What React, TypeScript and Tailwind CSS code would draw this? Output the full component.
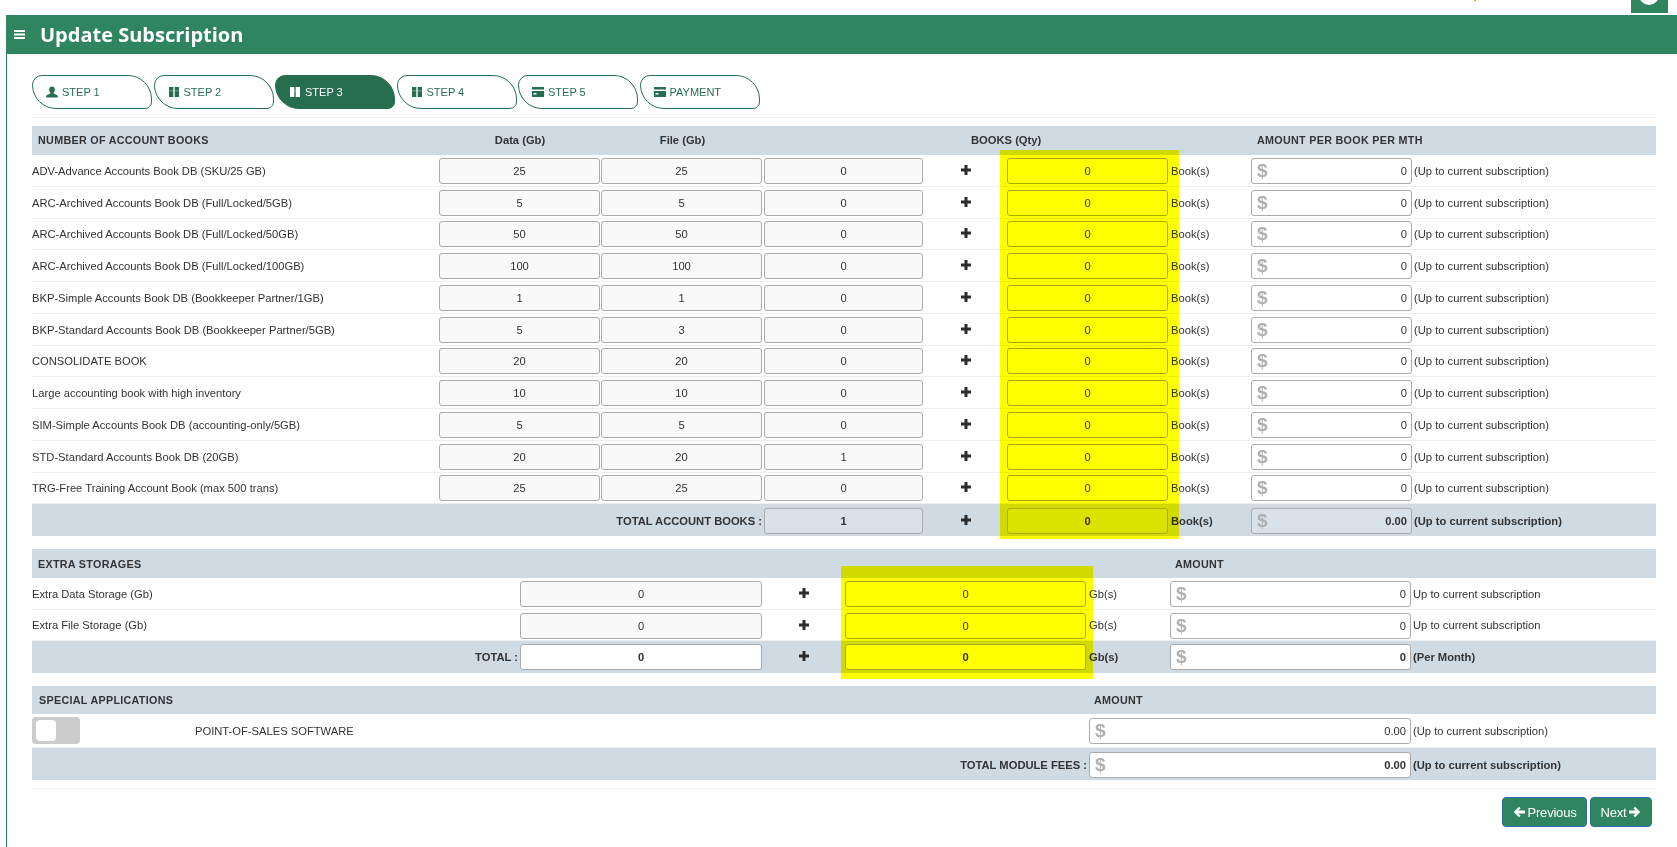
const GREEN = 'bg-[#2e855f]'

const books = [
  ['ADV-Advance Accounts Book DB (SKU/25 GB)', '25', '25', '0'],
  ['ARC-Archived Accounts Book DB (Full/Locked/5GB)', '5', '5', '0'],
  ['ARC-Archived Accounts Book DB (Full/Locked/50GB)', '50', '50', '0'],
  ['ARC-Archived Accounts Book DB (Full/Locked/100GB)', '100', '100', '0'],
  ['BKP-Simple Accounts Book DB (Bookkeeper Partner/1GB)', '1', '1', '0'],
  ['BKP-Standard Accounts Book DB (Bookkeeper Partner/5GB)', '5', '3', '0'],
  ['CONSOLIDATE BOOK', '20', '20', '0'],
  ['Large accounting book with high inventory', '10', '10', '0'],
  ['SIM-Simple Accounts Book DB (accounting-only/5GB)', '5', '5', '0'],
  ['STD-Standard Accounts Book DB (20GB)', '20', '20', '1'],
  ['TRG-Free Training Account Book (max 500 trans)', '25', '25', '0'],
]

const bookCols = 'grid grid-cols-[407px_162px_163px_159px_84px_161px_83px_161px_1fr] items-center'
const storageCols = 'grid grid-cols-[488px_242px_83px_241px_84px_241px_1fr] items-center'
const moduleCols = 'grid grid-cols-[1057px_322px_1fr] items-center'

function UserIcon({ className }: { className: string }) {
  return (
    <svg viewBox="0 0 12 12" className={`w-[12px] h-[12px] ${className}`} fill="currentColor">
      <path d="M6 .5c1.800 0 2.800 1.300 2.800 3 0 1.200-.5 2.300-1.200 3v1l3.400 1.400c.5.2.8.6.8 1.100V11.500H.2V10c0-.5.3-.9.8-1.100l3.400-1.400v-1C3.700 5.800 3.200 4.700 3.200 3.500c0-1.700 1-3 2.800-3z" />
    </svg>
  )
}

function BookIcon({ className }: { className: string }) {
  return (
    <svg viewBox="0 0 10 10" className={`w-[10px] h-[10px] ${className}`} fill="currentColor">
      <rect x="0" y="0" width="4.300" height="10" />
      <rect x="5.700" y="0" width="4.300" height="10" />
      <rect x="0" y="3.500" width="10" height="0.700" fill="#ffffff" opacity="0.5" />
    </svg>
  )
}

function CardIcon({ className }: { className: string }) {
  return (
    <svg viewBox="0 0 12 10" className={`w-[12px] h-[10px] ${className}`} fill="currentColor">
      <path d="M0 0h12v2.500H0zM0 4h12v6H0zM1.500 6v1.500h3V6z" fillRule="evenodd" />
    </svg>
  )
}

function PlusIcon() {
  return (
    <svg viewBox="0 0 10 10" className="w-[10px] h-[10px] text-[#2b2b2b] -mt-[2px]" fill="currentColor">
      <path d="M3.500 0h3v3.500H10v3H6.500V10h-3V6.500H0v-3h3.500z" />
    </svg>
  )
}

function ArrowIcon({ right }: { right?: boolean }) {
  return (
    <svg viewBox="0 0 12 12" className={`w-[12px] h-[12px] ${right ? 'rotate-180' : ''}`} fill="currentColor">
      <path d="M6 .8 7.600 2.400 5.300 4.600H12V7.400H5.300L7.600 9.600 6 11.200.8 6z" />
    </svg>
  )
}

function Tab({ label, icon, active }: { label: string; icon: 'user' | 'book' | 'card'; active?: boolean }) {
  const Icon = icon === 'user' ? UserIcon : icon === 'book' ? BookIcon : CardIcon
  return (
    <div
      className={`flex items-center gap-[4px] w-[120px] h-[34px] pl-[13px] border border-[#276e50] rounded-[14px_34px_10px_34px] text-[11px] ${active ? 'bg-[#276e50] text-white' : 'bg-white text-[#276e50]'}`}
    >
      <span className="flex justify-center w-[12px]">
        <Icon className={active ? 'text-white' : 'text-[#276e50]'} />
      </span>
      <span>{label}</span>
    </div>
  )
}

function Field({ value, width, tone = 'gray', bold }: { value: string; width: string; tone?: 'gray' | 'white' | 'clear'; bold?: boolean }) {
  const bg = tone === 'gray' ? 'bg-[#f9f9f9]' : tone === 'white' ? 'bg-white' : 'bg-[#dae2e9]'
  return (
    <div className={`flex items-center justify-center h-[26px] pt-[1px] border border-[#ababab] rounded-[3px] text-[11.200px] text-[#333] ${bg} ${width} ${bold ? 'font-bold' : ''}`}>
      {value}
    </div>
  )
}

function Money({ value, width, tone = 'white', bold }: { value: string; width: string; tone?: 'white' | 'clear'; bold?: boolean }) {
  return (
    <div className={`flex items-center justify-between h-[26px] pl-[5px] pr-[4px] border border-[#ababab] rounded-[3px] text-[11.200px] text-[#333] ${tone === 'white' ? 'bg-white' : 'bg-[#dae2e9]'} ${width} ${bold ? 'font-bold' : ''}`}>
      <span className="-mt-[1px] text-[19px] font-bold text-[#b0b0b0] leading-none">$</span>
      <span className="pt-[1px]">{value}</span>
    </div>
  )
}

function Plus() {
  return (
    <div className="flex justify-center pl-[1px]">
      <PlusIcon />
    </div>
  )
}

export default function App() {
  return (
    <div className="relative w-full h-[847px] overflow-hidden bg-white text-[11.200px] text-[#333] font-['Liberation_Sans',Arial,sans-serif]">
      <div className="flex justify-end h-[15px]">
        <div className="w-[2px] h-[1px] bg-[#e69a3c] mr-[155px]" />
        <div className={`relative w-[37px] h-[13px] overflow-hidden mr-[9px] ${GREEN}`}>
          <div className="absolute left-[8px] -top-[15px] w-[20px] h-[20px] rounded-full bg-white" />
        </div>
      </div>

      <div className="ml-[6px] h-[832px] border-l-[1.500px] border-[#2e855f]">
        <div className={`flex items-center h-[39px] pl-[7px] text-white ${GREEN}`}>
          <svg viewBox="0 0 11 9" className="w-[11px] h-[9px]" fill="currentColor">
            <path d="M0 0h11v2H0zM0 3.500h11v2H0zM0 7h11v2H0z" />
          </svg>
          <h1 className="ml-[15px] text-[20px] font-bold font-['Open_Sans',sans-serif]">Update Subscription</h1>
        </div>

        <div className="pl-[25px] pr-[21px]">
          <div className="flex gap-[1.500px] pt-[21px] pb-[8px] border-b border-[#eeeeee]">
            <Tab label="STEP 1" icon="user" />
            <Tab label="STEP 2" icon="book" />
            <Tab label="STEP 3" icon="book" active />
            <Tab label="STEP 4" icon="book" />
            <Tab label="STEP 5" icon="card" />
            <Tab label="PAYMENT" icon="card" />
          </div>

          {/* account books */}
          <div className="relative mt-[8px]">
            <div className={`${bookCols} h-[29px] bg-[#d0dae3] font-bold`}>
              <span className="pl-[6px] text-[10.750px] tracking-[0.300px] whitespace-nowrap">NUMBER OF ACCOUNT BOOKS</span>
              <span className="text-center">Data (Gb)</span>
              <span className="text-center">File (Gb)</span>
              <span />
              <span />
              <span className="-ml-[36px] whitespace-nowrap">BOOKS (Qty)</span>
              <span />
              <span className="pl-[6px] whitespace-nowrap text-[10.750px] tracking-[0.300px]">AMOUNT PER BOOK PER MTH</span>
            </div>
            {books.map(b => (
              <div key={b[0]} className={`${bookCols} h-[31.750px] pt-[1px] border-b border-[#eeeeee]`}>
                <span className="pt-[1px] whitespace-nowrap">{b[0]}</span>
                <Field value={b[1]} width="w-[161px]" />
                <Field value={b[2]} width="w-[161px]" />
                <Field value={b[3]} width="w-[159px]" />
                <Plus />
                <Field value="0" width="w-[161px]" tone="white" />
                <span className="pt-[1px] pl-[3px]">Book(s)</span>
                <Money value="0" width="w-[161px]" />
                <span className="pt-[1px] pl-[2px] whitespace-nowrap">(Up to current subscription)</span>
              </div>
            ))}
            <div className={`${bookCols} h-[32px] pt-[1px] bg-[#d0dae3] font-bold`}>
              <span />
              <span />
              <span className="pt-[1px] text-right pr-[2px] whitespace-nowrap">TOTAL ACCOUNT BOOKS :</span>
              <Field value="1" width="w-[159px]" tone="clear" bold />
              <Plus />
              <Field value="0" width="w-[161px]" tone="clear" bold />
              <span className="pt-[1px] pl-[3px]">Book(s)</span>
              <Money value="0.00" width="w-[161px]" tone="clear" bold />
              <span className="pt-[1px] pl-[2px] whitespace-nowrap">(Up to current subscription)</span>
            </div>
            <div className="absolute left-[967.500px] top-[24px] w-[179px] h-[389px] bg-[#ffff00] mix-blend-multiply" />
          </div>

          {/* extra storage */}
          <div className="relative mt-[13px]">
            <div className={`${storageCols} h-[29px] bg-[#d0dae3] font-bold`}>
              <span className="pl-[6px] text-[10.750px] tracking-[0.300px]">EXTRA STORAGES</span>
              <span />
              <span />
              <span />
              <span />
              <span className="pl-[5px] text-[10.750px] tracking-[0.300px]">AMOUNT</span>
            </div>
            {['Extra Data Storage (Gb)', 'Extra File Storage (Gb)'].map(label => (
              <div key={label} className={`${storageCols} h-[31.500px] pt-[1px] border-b border-[#eeeeee]`}>
                <span>{label}</span>
                <Field value="0" width="w-[242px]" />
                <Plus />
                <Field value="0" width="w-[241px]" tone="white" />
                <span className="pl-[3px]">Gb(s)</span>
                <Money value="0" width="w-[241px]" />
                <span className="pl-[2px] whitespace-nowrap">Up to current subscription</span>
              </div>
            ))}
            <div className={`${storageCols} h-[32px] bg-[#d0dae3] font-bold`}>
              <span className="text-right pr-[2px]">TOTAL :</span>
              <Field value="0" width="w-[242px]" tone="white" />
              <Plus />
              <Field value="0" width="w-[241px]" tone="white" />
              <span className="pl-[3px]">Gb(s)</span>
              <Money value="0" width="w-[241px]" />
              <span className="pl-[2px] whitespace-nowrap">(Per Month)</span>
            </div>
            <div className="absolute left-[808.500px] top-[17px] w-[252px] h-[113px] bg-[#ffff00] mix-blend-multiply" />
          </div>

          {/* special applications */}
          <div className="mt-[13px] pb-[8px] border-b border-[#eeeeee]">
            <div className={`${moduleCols} h-[28px] bg-[#d0dae3] font-bold`}>
              <span className="pl-[7px] text-[10.750px] tracking-[0.300px]">SPECIAL APPLICATIONS</span>
              <span className="pl-[5px] text-[10.750px] tracking-[0.300px]">AMOUNT</span>
            </div>
            <div className={`${moduleCols} h-[34px] pt-[1px] border-b border-[#eeeeee]`}>
              <div className="flex items-center">
                <div className="flex items-center w-[48px] h-[27px] -mt-[2px] pl-[4px] bg-[#cccccc] rounded-[4px]">
                  <div className="w-[20px] h-[21px] bg-white rounded-[4px]" />
                </div>
                <span className="pt-[1px] ml-[115px]">POINT-OF-SALES SOFTWARE</span>
              </div>
              <Money value="0.00" width="w-[322px]" />
              <span className="pt-[1px] pl-[2px] whitespace-nowrap">(Up to current subscription)</span>
            </div>
            <div className={`${moduleCols} h-[32px] pt-[1px] bg-[#d0dae3] font-bold`}>
              <span className="pt-[1px] text-right pr-[2px]">TOTAL MODULE FEES :</span>
              <Money value="0.00" width="w-[322px]" />
              <span className="pt-[1px] pl-[2px] whitespace-nowrap">(Up to current subscription)</span>
            </div>
          </div>

          <div className="flex justify-end gap-[3px] mt-[8px] pr-[4px]">
            <button className={`flex items-center justify-center gap-[3px] w-[85px] h-[30px] rounded-[4px] border border-[#2e6da4] text-white text-[13px] tracking-[-0.200px] ${GREEN}`}>
              <ArrowIcon />
              Previous
            </button>
            <button className={`flex items-center justify-center gap-[3px] w-[62px] h-[30px] rounded-[4px] border border-[#2e6da4] text-white text-[13px] tracking-[-0.200px] ${GREEN}`}>
              Next
              <ArrowIcon right />
            </button>
          </div>
        </div>
      </div>
    </div>
  )
}
